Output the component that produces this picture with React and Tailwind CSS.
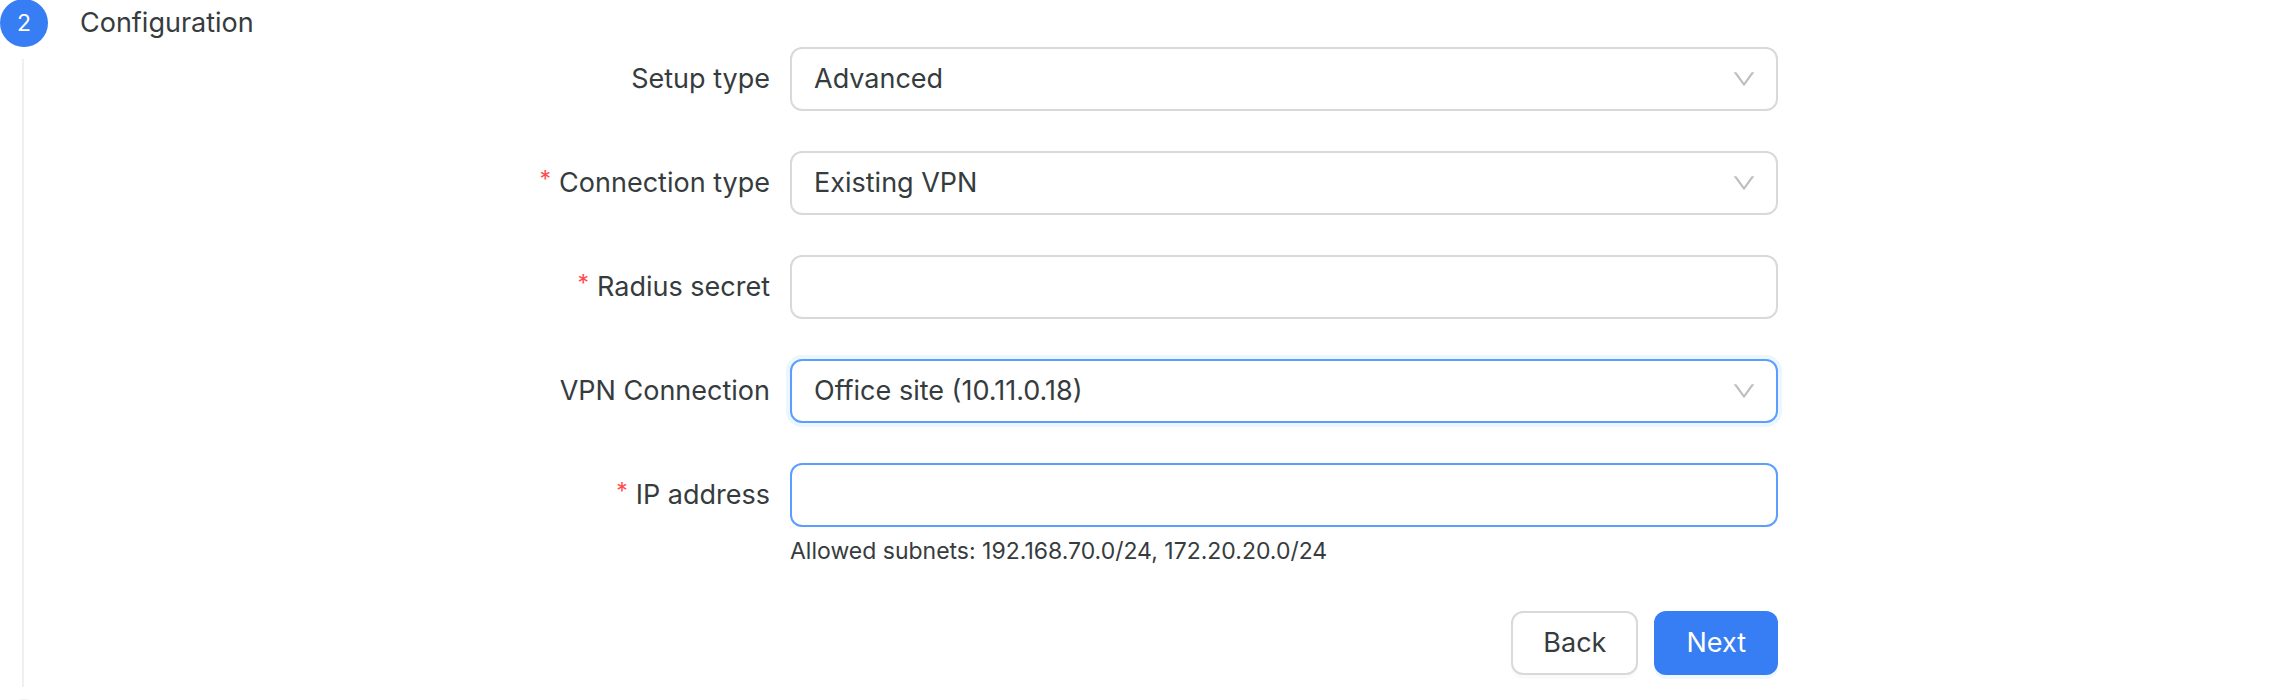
import { useState } from 'react';

const controlBase =
  'block w-full h-16 rounded-xl border-2 bg-white px-[22px] text-[27px] leading-10 text-[#363c3e] outline-none';

function DownIcon() {
  return (
    <svg
      viewBox="64 64 896 896"
      fill="currentColor"
      aria-hidden="true"
      className="pointer-events-none absolute right-[22px] top-5 size-6 text-[#bfbfbf]"
    >
      <path d="M884 256h-75c-5.1 0-9.9 2.5-12.9 6.6L512 654.2 227.9 262.6c-3-4.1-7.8-6.6-12.9-6.6h-75c-6.5 0-10.3 7.4-6.5 12.7l352.6 486.1c12.8 17.6 39 17.6 51.7 0l352.6-486.1c3.9-5.3.1-12.7-6.4-12.7z" />
    </svg>
  );
}

function FormRow({ id, label, required, help, children }) {
  return (
    <div className="grid grid-cols-[710fr_988fr_510fr]">
      <div className="flex h-16 items-center justify-end pr-5">
        {required && <span className="mr-2 pb-2 text-[23px] leading-8 text-[#ff4d4f]">*</span>}
        <label htmlFor={id} className="whitespace-nowrap">{label}</label>
      </div>
      <div>
        {children}
        {help && <p className="pt-2 text-[23px] leading-8">{help}</p>}
      </div>
    </div>
  );
}

function SelectField({ id, value, options, onChange, focused }) {
  return (
    <div className="relative">
      <select
        id={id}
        value={value}
        onChange={(e) => onChange(e.target.value)}
        className={`${controlBase} appearance-none ${
          focused ? 'border-[#5c9eff] ring-4 ring-[#ebf6ff]' : 'border-[#d9d9d9]'
        }`}
      >
        {options.map((option) => (
          <option key={option}>{option}</option>
        ))}
      </select>
      <DownIcon />
    </div>
  );
}

export default function App() {
  const [setupType, setSetupType] = useState('Advanced');
  const [connectionType, setConnectionType] = useState('Existing VPN');
  const [secret, setSecret] = useState('');
  const [vpn, setVpn] = useState('Office site (10.11.0.18)');
  const [ip, setIp] = useState('');

  return (
    <div className="max-h-screen overflow-hidden bg-white font-['Inter',sans-serif] text-[27px] leading-10 text-[#363c3e]">
      <div className="-mt-px flex">
        {/* Step marker and tail */}
        <div className="flex w-20 shrink-0 flex-col">
          <div className="flex size-12 items-center justify-center rounded-full bg-[#377df3] text-[23px] text-white">
            2
          </div>
          <div className="mb-3 ml-[22px] mt-3 w-0.5 grow bg-[#f0f0f0]" />
        </div>

        <div className="min-w-0 grow pb-6">
          <h2 className="flex h-12 items-center">Configuration</h2>

          <form className="flex flex-col gap-10" onSubmit={(e) => e.preventDefault()}>
            <FormRow id="setup-type" label="Setup type">
              <SelectField
                id="setup-type"
                value={setupType}
                options={['Simple', 'Advanced']}
                onChange={setSetupType}
              />
            </FormRow>

            <FormRow id="connection-type" label="Connection type" required>
              <SelectField
                id="connection-type"
                value={connectionType}
                options={['Existing VPN', 'New VPN']}
                onChange={setConnectionType}
              />
            </FormRow>

            <FormRow id="radius-secret" label="Radius secret" required>
              <input
                id="radius-secret"
                type="text"
                value={secret}
                onChange={(e) => setSecret(e.target.value)}
                className={`${controlBase} border-[#d9d9d9]`}
              />
            </FormRow>

            <FormRow id="vpn-connection" label="VPN Connection">
              <SelectField
                id="vpn-connection"
                value={vpn}
                options={['Office site (10.11.0.18)']}
                onChange={setVpn}
                focused
              />
            </FormRow>

            <FormRow
              id="ip-address"
              label="IP address"
              required
              help="Allowed subnets: 192.168.70.0/24, 172.20.20.0/24"
            >
              <input
                id="ip-address"
                type="text"
                value={ip}
                onChange={(e) => setIp(e.target.value)}
                className={`${controlBase} border-[#5c9eff]`}
              />
            </FormRow>

            <div className="grid grid-cols-[710fr_988fr_510fr]">
              <div className="col-start-2 flex justify-end gap-4 pt-1">
                <button
                  type="button"
                  className="h-16 rounded-xl border-2 border-[#d9d9d9] bg-white px-[30px] shadow-[0_4px_0_rgba(0,0,0,0.02)]"
                >
                  Back
                </button>
                <button
                  type="submit"
                  className="h-16 rounded-xl bg-[#377df3] px-8 text-white shadow-[0_4px_0_#eff7ff]"
                >
                  Next
                </button>
              </div>
            </div>
          </form>
        </div>
      </div>

      {/* Next step */}
      <div className="size-12 rounded-full bg-[#f0f0f0]" />
    </div>
  );
}
